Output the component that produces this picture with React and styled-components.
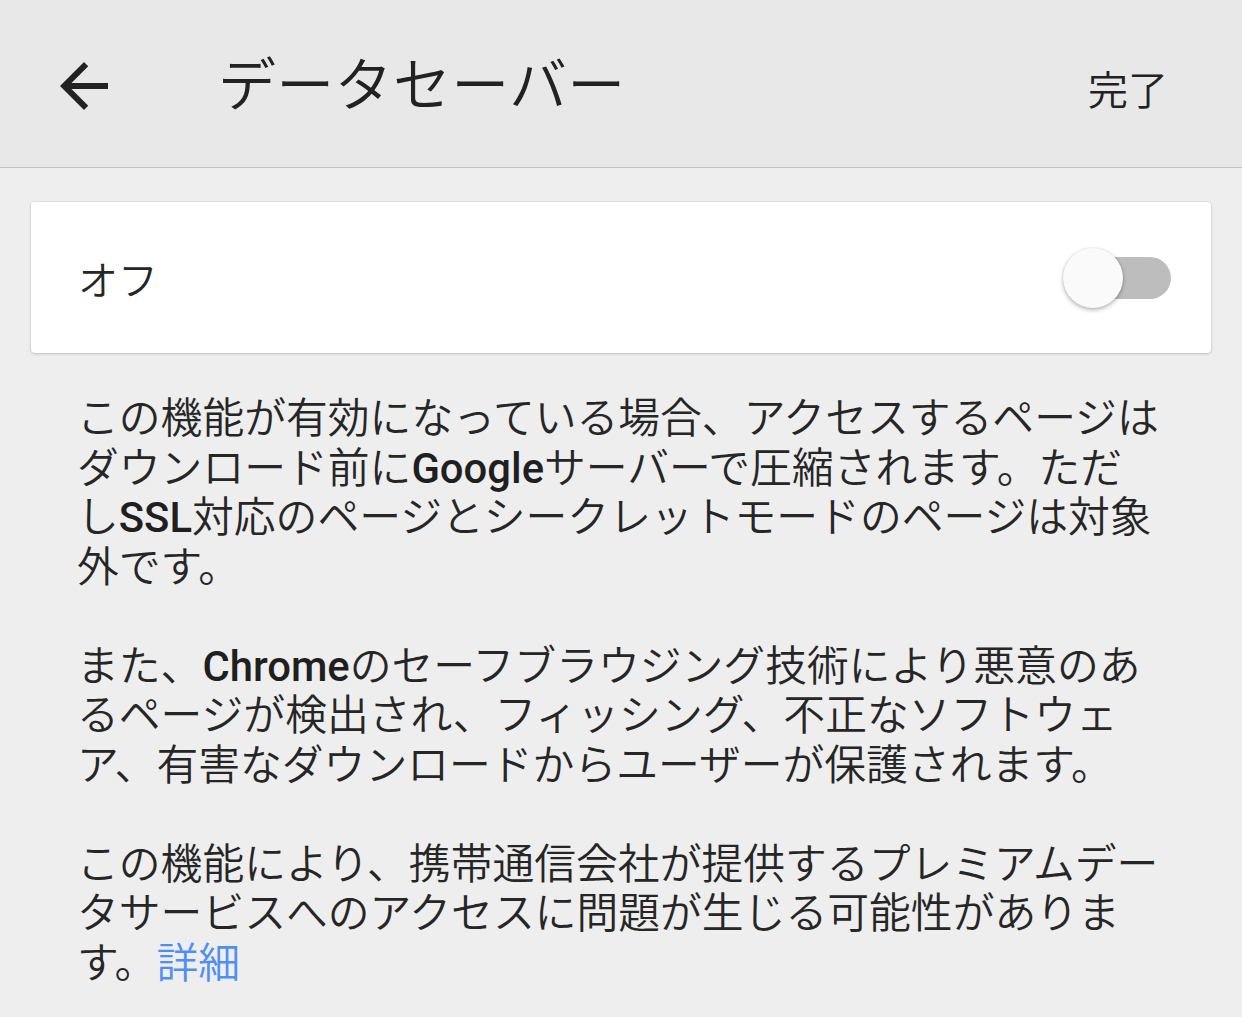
import React from "react";
import styled, { createGlobalStyle } from "styled-components";

const GlobalStyle = createGlobalStyle`
  html, body {
    margin: 0;
    padding: 0;
    background: #eeeeee;
  }
  body {
    font-family: "Roboto", "Noto Sans CJK JP", sans-serif;
    color: #262626;
  }
`;

const Page = styled.div`
  width: 1242px;
  min-height: 1017px;
  background: #eeeeee;
`;

const Header = styled.header`
  height: 167px;
  display: flex;
  align-items: center;
  background: #e8e8e8;
  border-bottom: 1px solid #c2c2c2;
  box-sizing: content-box;
`;

const BackButton = styled.button`
  width: 72px;
  height: 72px;
  margin-left: 48px;
  margin-top: 4px;
  padding: 0;
  border: none;
  background: none;
  display: flex;
  cursor: pointer;
  svg {
    width: 72px;
    height: 72px;
  }
`;

const Title = styled.h1`
  flex: 1;
  margin: -6px 0 0 98px;
  font-size: 58px;
  font-weight: 350;
  letter-spacing: 0.3px;
  color: #222;
`;

const Done = styled.button`
  margin: 8px 74px 0 0;
  padding: 0;
  border: none;
  background: none;
  font-family: "Roboto", "Noto Sans CJK JP", sans-serif;
  font-size: 40px;
  font-weight: 350;
  color: #222;
  cursor: pointer;
`;

const Card = styled.div`
  margin: 34px 31px 0;
  height: 151px;
  display: flex;
  align-items: center;
  justify-content: space-between;
  background: #fff;
  border-radius: 4px;
  box-shadow: 0 1px 3px rgba(0, 0, 0, 0.18), 0 0 0 1px rgba(0, 0, 0, 0.03);
  padding: 0 40px 0 47px;
`;

const Label = styled.span`
  font-size: 40px;
  font-weight: 350;
  color: #262626;
`;

const Track = styled.div`
  position: relative;
  width: 102px;
  height: 42px;
  border-radius: 21px;
  background: ${(p) => (p.$on ? "#8ab4f8" : "#bdbdbd")};
  cursor: pointer;
`;

const Thumb = styled.div`
  position: absolute;
  top: -9px;
  left: ${(p) => (p.$on ? "48px" : "-6px")};
  width: 60px;
  height: 60px;
  border-radius: 50%;
  background: #fafafa;
  box-shadow: 0 2px 4px rgba(0, 0, 0, 0.28), 0 0 2px rgba(0, 0, 0, 0.12);
`;

const Body = styled.div`
  padding: 41px 30px 0 77px;
`;

const Para = styled.p`
  margin: 0 0 49.5px;
  font-size: 41.8px;
  font-weight: 350;
  line-height: 49.5px;
  color: #262626;
  white-space: nowrap;
`;

const Latin = styled.span`
  font-family: "Roboto", sans-serif;
  font-weight: 500;
  color: #1f1f1f;
`;

const Link = styled.a`
  color: #4f8ff5;
  text-decoration: none;
  cursor: pointer;
`;

const ArrowBack = () => (
  <svg viewBox="0 0 24 24">
    <path
      fill="#222"
      d="M20 11H7.83l5.59-5.59L12 4l-8 8 8 8 1.41-1.41L7.83 13H20v-2z"
    />
  </svg>
);

export default function App() {
  const [on, setOn] = React.useState(false);

  return (
    <Page>
      <GlobalStyle />
      <Header>
        <BackButton aria-label="戻る">
          <ArrowBack />
        </BackButton>
        <Title>データセーバー</Title>
        <Done>完了</Done>
      </Header>

      <Card>
        <Label>{on ? "オン" : "オフ"}</Label>
        <Track $on={on} onClick={() => setOn(!on)}>
          <Thumb $on={on} />
        </Track>
      </Card>

      <Body>
        <Para>
          この機能が有効になっている場合、アクセスするページは
          <br />
          ダウンロード前に<Latin>Google</Latin>サーバーで圧縮されます。ただ
          <br />し<Latin>SSL</Latin>対応のページとシークレットモードのページは対象
          <br />
          外です。
        </Para>
        <Para>
          また、<Latin>Chrome</Latin>のセーフブラウジング技術により悪意のあ
          <br />
          るページが検出され、フィッシング、不正なソフトウェ
          <br />
          ア、有害なダウンロードからユーザーが保護されます。
        </Para>
        <Para>
          この機能により、携帯通信会社が提供するプレミアムデー
          <br />
          タサービスへのアクセスに問題が生じる可能性がありま
          <br />
          す。<Link>詳細</Link>
        </Para>
      </Body>
    </Page>
  );
}
